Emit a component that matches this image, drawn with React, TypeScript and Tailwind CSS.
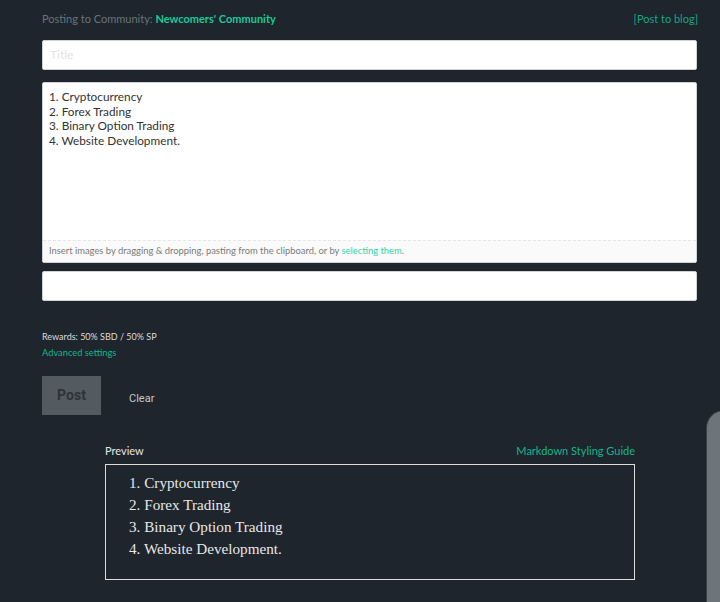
import React from "react";

const sans = { fontFamily: '"Lato", "Noto Sans", sans-serif' } as const;

export default function App() {
  return (
    <div className="relative w-[720px] h-[602px] overflow-hidden bg-[#1e252c]" style={sans}>
      <div className="ml-[42px] w-[655px] pt-[12px]">
        <div className="flex justify-between items-center h-[14px] text-[11px]">
          <div className="text-[#6b737b]">
            Posting to Community: <span className="font-bold text-[#1ac99a]">Newcomers' Community</span>
          </div>
          <div className="text-[#16a583] mr-[-1px]">[Post to blog]</div>
        </div>
        <div className="mt-[14px] h-[30px] rounded-[2px] bg-white border border-[#cfd2d4] flex items-center px-[7px] text-[12px] text-[#e3e3e3]">
          Title
        </div>
        <div className="mt-[12px] h-[181px] rounded-[2px] bg-white border border-[#cfd2d4] flex flex-col">
          <div className="flex-1 px-[6px] pt-[7px] text-[11.8px] leading-[14.5px] text-[#333]">
            <div>1. Cryptocurrency</div>
            <div>2. Forex Trading</div>
            <div>3. Binary Option Trading</div>
            <div>4. Website Development.</div>
          </div>
          <div className="h-[22px] bg-[#fafafa] border-t border-dashed border-[#e6e6e6] flex items-center px-[6px] text-[9.4px] text-[#7a7a7a] whitespace-nowrap">
            Insert images by dragging &amp; dropping, pasting from the clipboard, or by&nbsp;
            <span className="text-[#2fd6ad]">selecting them</span>.
          </div>
        </div>
        <div className="mt-[8px] h-[30px] rounded-[2px] bg-white border border-[#cfd2d4]" />
        <div className="mt-[30px] text-[9px] text-[#dcdcdc] leading-[12px]">Rewards: 50% SBD / 50% SP</div>
        <div className="mt-[4px] text-[9.3px] text-[#16b58c] leading-[12px]">Advanced settings</div>
        <div className="mt-[17px] flex items-center">
          <div className="w-[59px] h-[39px] bg-[#545b60] flex items-center justify-center text-[14px] font-bold text-[#2d3339]" style={{ fontFamily: 'Roboto, sans-serif' }}>
            Post
          </div>
          <div className="ml-[28px] mt-[8px] text-[11px] text-[#c5c8cb]" style={{ fontFamily: 'Roboto, sans-serif' }}>Clear</div>
        </div>
      </div>
      <div className="ml-[105px] w-[530px] mt-[30px]">
        <div className="flex justify-between items-end text-[11px] h-[14px]">
          <span className="text-[#e6e6e6]">Preview</span>
          <span className="text-[#16b58c]">Markdown Styling Guide</span>
        </div>
        <div className="mt-[5px] h-[116px] border border-[#dcdcdc] pt-[7px] pl-[23px] text-[15.2px] leading-[22px] text-[#e8e8e8]" style={{ fontFamily: '"Liberation Serif", serif' }}>
          <div>1. Cryptocurrency</div>
          <div>2. Forex Trading</div>
          <div>3. Binary Option Trading</div>
          <div>4. Website Development.</div>
        </div>
      </div>
      <div className="absolute left-[706px] top-[410px] w-[40px] h-[260px] rounded-[18px] bg-[#6e757a] border border-[#3a4147]" />
    </div>
  );
}
